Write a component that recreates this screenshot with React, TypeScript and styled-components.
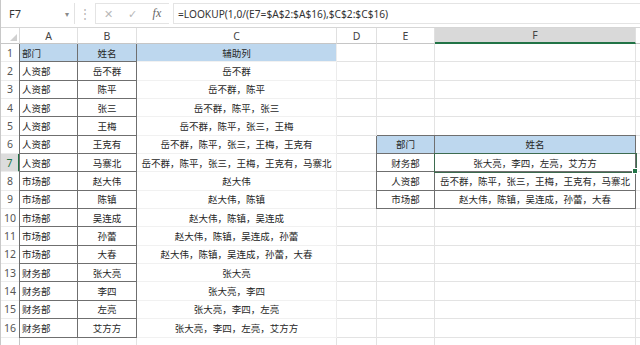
import styled, { createGlobalStyle, css } from 'styled-components'

const GlobalStyle = createGlobalStyle`
  html, body {
    margin: 0;
    padding: 0;
    background: #ffffff;
    overflow: hidden;
  }
  body {
    font-family: 'Noto Sans', 'Noto Sans CJK SC', sans-serif;
  }
`

const ROW_H = 18.35
const TABLE_LINE = '#6f6f6f'
const GRID_LINE = '#e3e3e3'

// G is only a sliver at the right edge, so its letter is not shown
const COLS = ['A', 'B', 'C', 'D', 'E', 'F', '']

const left: string[] = [
  '部门',
  '人资部', '人资部', '人资部', '人资部', '人资部', '人资部',
  '市场部', '市场部', '市场部', '市场部', '市场部',
  '财务部', '财务部', '财务部', '财务部'
]

const names: string[] = [
  '姓名',
  '岳不群', '陈平', '张三', '王梅', '王克有', '马寨北',
  '赵大伟', '陈镇', '吴连成', '孙蕾', '大春',
  '张大亮', '李四', '左亮', '艾方方'
]

const buildHelper = () => {
  const out: string[] = ['辅助列']
  let acc: string[] = []
  for (let i = 1; i < left.length; i++) {
    if (left[i] !== left[i - 1]) acc = []
    acc.push(names[i])
    out.push(acc.join('，'))
  }
  return out
}

const helper = buildHelper()

const summary: Record<number, [string, string]> = {
  6: ['部门', '姓名'],
  7: ['财务部', '张大亮，李四，左亮，艾方方'],
  8: ['人资部', '岳不群，陈平，张三，王梅，王克有，马寨北'],
  9: ['市场部', '赵大伟，陈镇，吴连成，孙蕾，大春']
}

const App = () => {
  const rows = Array.from({ length: 17 }, (_, i) => i + 1)

  return (
    <>
      <GlobalStyle />
      <Window>
        <FormulaBar>
          <NameBox>
            <span>F7</span>
            <Caret>▾</Caret>
          </NameBox>
          <Dots>⋮</Dots>
          <ActionBox>
            <Action>✕</Action>
            <Action>✓</Action>
            <Fx>fx</Fx>
          </ActionBox>
          <FormulaInput>=LOOKUP(1,0/(E7=$A$2:$A$16),$C$2:$C$16)</FormulaInput>
        </FormulaBar>

        <Sheet>
          <Corner>
            <CornerMark />
          </Corner>
          {COLS.map((c, n) => (
            <ColHead key={n} $active={c === 'F'}>
              {c}
            </ColHead>
          ))}

          {rows.map((r) => {
            const i = r - 1
            const inData = r <= 16
            const head = r === 1
            const sum = summary[r]
            return [
              <RowHead key={`h${r}`} $active={r === 7}>
                {inData ? r : ''}
              </RowHead>,
              <Cell
                key={`a${r}`}
                $bordered={inData}
                $leftEdge={inData}
                $fill={head}
              >
                {inData ? left[i] : ''}
              </Cell>,
              <Cell key={`b${r}`} $align="center" $bordered={inData} $fill={head}>
                {inData ? names[i] : ''}
              </Cell>,
              <Cell key={`c${r}`} $align="center" $fill={head} $faint={inData}>
                {inData ? helper[i] : ''}
              </Cell>,
              <Cell key={`d${r}`} />,
              <Cell
                key={`e${r}`}
                $align="center"
                $bordered={!!sum}
                $leftEdge={!!sum}
                $topEdge={r === 6}
                $fill={r === 6}
              >
                {sum ? sum[0] : ''}
              </Cell>,
              <Cell
                key={`f${r}`}
                $align="center"
                $bordered={!!sum}
                $topEdge={r === 6}
                $fill={r === 6}
                $selected={r === 7}
              >
                {sum ? sum[1] : ''}
                {r === 7 && <FillHandle />}
              </Cell>,
              <Cell key={`g${r}`} />
            ]
          })}
        </Sheet>
      </Window>
    </>
  )
}

const Window = styled.div`
  width: 640px;
  height: 345px;
  overflow: hidden;
  background: #ffffff;
  border-left: 1px solid #c8c8c8;
  box-sizing: border-box;
`

const FormulaBar = styled.div`
  display: flex;
  align-items: center;
  height: 28px;
  padding: 3px 0 3px 0;
  box-sizing: border-box;
  background: #ffffff;
  border-bottom: 1px solid #d6d6d6;
  font-family: 'Noto Sans', sans-serif;
`

const NameBox = styled.div`
  display: flex;
  align-items: center;
  justify-content: space-between;
  width: 74px;
  height: 21px;
  padding: 0 5px 0 8px;
  box-sizing: border-box;
  border-right: 1px solid #e2e2e2;
  font-size: 11px;
  color: #333333;
`

const Caret = styled.span`
  font-size: 8px;
  color: #8a8a8a;
`

const Dots = styled.div`
  width: 20px;
  text-align: center;
  font-size: 12px;
  color: #b5b5b5;
`

const ActionBox = styled.div`
  display: flex;
  align-items: center;
  justify-content: space-around;
  width: 74px;
  height: 21px;
  margin-right: 4px;
  box-sizing: border-box;
  border: 1px solid #e4e4e4;
  border-right: none;
`

const Action = styled.span`
  font-size: 11px;
  color: #b8b8b8;
`

const Fx = styled.span`
  font-family: 'Liberation Serif', serif;
  font-style: italic;
  font-size: 12px;
  color: #666666;
`

const FormulaInput = styled.div`
  flex: 1;
  height: 21px;
  display: flex;
  align-items: center;
  padding-left: 4px;
  box-sizing: border-box;
  border: 1px solid #e4e4e4;
  border-right: none;
  font-size: 10.2px;
  color: #333333;
  white-space: nowrap;
`

const Sheet = styled.div`
  display: grid;
  grid-template-columns: 19px 58px 59px 200px 40px 58px 201px 1fr;
  grid-template-rows: 16px repeat(17, ${ROW_H}px);
`

const Corner = styled.div`
  position: relative;
  background: #ffffff;
  border-right: 1px solid #dadada;
  border-bottom: 1px solid #c6c6c6;
`

const CornerMark = styled.div`
  position: absolute;
  right: 2px;
  bottom: 2px;
  width: 0;
  height: 0;
  border-left: 7px solid transparent;
  border-bottom: 7px solid #d0d0d0;
`

const ColHead = styled.div<{ $active?: boolean }>`
  display: flex;
  align-items: center;
  justify-content: center;
  font-size: 10.5px;
  color: #444444;
  background: ${(p) => (p.$active ? '#d9d9d9' : '#ffffff')};
  border-right: 1px solid #e0e0e0;
  border-bottom: ${(p) => (p.$active ? '2px solid #217346' : '1px solid #c6c6c6')};
`

const RowHead = styled.div<{ $active?: boolean }>`
  display: flex;
  align-items: center;
  justify-content: center;
  font-size: 10.5px;
  color: ${(p) => (p.$active ? '#217346' : '#555555')};
  background: ${(p) => (p.$active ? '#dcdcdc' : '#ffffff')};
  border-right: ${(p) => (p.$active ? '2px solid #217346' : '1px solid #c6c6c6')};
  border-bottom: 1px solid #ececec;
`

const Cell = styled.div<{
  $align?: 'left' | 'center'
  $bordered?: boolean
  $leftEdge?: boolean
  $topEdge?: boolean
  $fill?: boolean
  $faint?: boolean
  $selected?: boolean
}>`
  position: relative;
  display: flex;
  align-items: center;
  justify-content: ${(p) => (p.$align === 'center' ? 'center' : 'flex-start')};
  padding: 0 2px;
  overflow: hidden;
  white-space: nowrap;
  font-family: 'Noto Sans CJK SC', 'Noto Sans', sans-serif;
  font-size: 9.5px;
  color: #262626;
  background: ${(p) => (p.$fill ? '#bdd7ee' : '#ffffff')};
  border-right: 1px solid ${GRID_LINE};
  border-bottom: 1px solid ${GRID_LINE};

  ${(p) =>
    p.$faint &&
    css`
      border-bottom-color: #f1f1f1;
      border-right-color: #ececec;
    `}

  ${(p) =>
    p.$bordered &&
    css`
      border-right-color: ${TABLE_LINE};
      border-bottom-color: ${TABLE_LINE};
    `}

  ${(p) =>
    (p.$leftEdge || p.$topEdge) &&
    css`
      box-shadow: ${p.$leftEdge ? `-1px 0 0 ${TABLE_LINE}` : '0 0 0 transparent'},
        ${p.$topEdge ? `0 -1px 0 ${TABLE_LINE}` : '0 0 0 transparent'};
    `}

  ${(p) =>
    p.$selected &&
    css`
      overflow: visible;
      z-index: 2;
      outline: 1px solid #3d6b4f;
      outline-offset: 0;
    `}
`

const FillHandle = styled.span`
  position: absolute;
  right: -3px;
  bottom: -3px;
  width: 4px;
  height: 4px;
  background: #217346;
  border: 1px solid #ffffff;
`

export default App
